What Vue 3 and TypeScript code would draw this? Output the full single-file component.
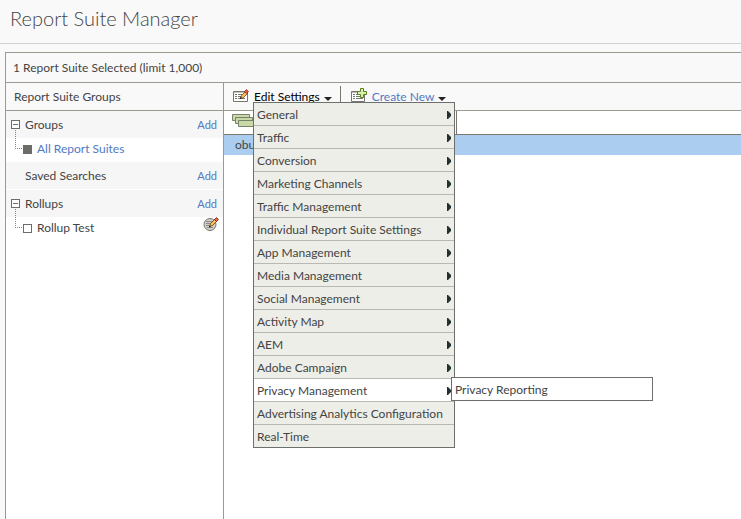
<script setup lang="ts">
import { ref } from 'vue'

interface MenuItem {
  label: string
  submenu: boolean
  children?: string[]
}

const withArrow = (label: string, children?: string[]): MenuItem => ({ label, submenu: true, children })

const menuItems: MenuItem[] = [
  withArrow('General'),
  withArrow('Traffic'),
  withArrow('Conversion'),
  withArrow('Marketing Channels'),
  withArrow('Traffic Management'),
  withArrow('Individual Report Suite Settings'),
  withArrow('App Management'),
  withArrow('Media Management'),
  withArrow('Social Management'),
  withArrow('Activity Map'),
  withArrow('AEM'),
  withArrow('Adobe Campaign'),
  withArrow('Privacy Management', ['Privacy Reporting']),
  { label: 'Advertising Analytics Configuration', submenu: false },
  { label: 'Real-Time', submenu: false },
]

const activeItem = ref('Privacy Management')
const allSuites = ref(true)
const rollupTest = ref(false)
</script>

<template>
  <div class="page">
    <header class="title-bar">
      <h1>Report Suite Manager</h1>
    </header>
    <main class="panel">
      <div class="selection">1 Report Suite Selected (limit 1,000)</div>
      <div class="columns">
        <aside class="sidebar">
          <h2 class="side-title">Report Suite Groups</h2>
          <section>
            <div class="group">
              <button class="toggle" type="button" aria-label="Collapse Groups"></button>
              <span class="group-name">Groups</span>
              <a href="#" class="add">Add</a>
            </div>
            <div class="leaf">
              <span class="branch"></span>
              <input id="all-suites" v-model="allSuites" type="checkbox" class="box" />
              <label for="all-suites" class="leaf-link">All Report Suites</label>
            </div>
          </section>
          <section>
            <div class="group">
              <span class="group-name">Saved Searches</span>
              <a href="#" class="add">Add</a>
            </div>
          </section>
          <section class="spaced">
            <div class="group">
              <button class="toggle" type="button" aria-label="Collapse Rollups"></button>
              <span class="group-name">Rollups</span>
              <a href="#" class="add">Add</a>
            </div>
            <div class="leaf">
              <span class="branch"></span>
              <input id="rollup-test" v-model="rollupTest" type="checkbox" class="box" />
              <label for="rollup-test">Rollup Test</label>
              <button class="edit" type="button" aria-label="Edit Rollup Test">
                <svg width="16" height="14" viewBox="0 0 16 14">
                  <circle cx="7" cy="7.500" r="6" fill="#d0d0ca" stroke="#77776f" />
                  <path d="M3 4.500h6M3 6.500h4M3 8.500h3M4 10.500h6" stroke="#8c8c84" />
                  <path d="M6.500 9.500l1-3 4-4 2 2-4 4z" fill="#fbbd55" stroke="#4a2a12" stroke-width=".7" />
                  <path d="M11.500 2.500l2-2 2 2-2 2z" fill="#ee5a48" stroke="#5e1712" stroke-width=".7" />
                  <path d="M6 10.500v-2l2 1z" fill="#222" />
                </svg>
              </button>
            </div>
          </section>
        </aside>

        <section class="content">
          <nav class="toolbar">
            <div class="tool">
              <svg class="tool-icon" width="16" height="14" viewBox="0 0 16 14">
                <path d="M.5 2.500h14v10H.5z" fill="#fff" stroke="#77776e" />
                <path d="M1 3.500h13" stroke="#c4c4ba" />
                <path d="M2 5.500h2M5 5.500h4M2 7.500h2M5 7.500h3M2 9.500h2M5 9.500h7" stroke="#77776e" />
                <path d="M7.500 9.500l1-3 4-4 2 2-4 4z" fill="#fbbd55" stroke="#5a3216" stroke-width=".7" />
                <path d="M11.500 2.500l2-2 2 2-2 2z" fill="#ee5a48" stroke="#7a1b15" stroke-width=".7" />
                <path d="M7 10V8l2 1z" fill="#222" />
              </svg>
              <button class="tool-button" type="button" aria-haspopup="menu" aria-expanded="true">
                <span class="strong">Edit Settings</span>
                <svg class="caret" width="8" height="4" viewBox="0 0 8 4"><path d="M0 0h8L4 4z" fill="#222" /></svg>
              </button>
              <ul class="menu" role="menu">
                <li
                  v-for="item in menuItems"
                  :key="item.label"
                  class="menu-item"
                  :class="{ active: item.label === activeItem }"
                  role="none"
                >
                  <button class="menu-button" type="button" role="menuitem" @mouseenter="activeItem = item.label">
                    <span>{{ item.label }}</span>
                    <svg v-if="item.submenu" class="arrow" width="4" height="8" viewBox="0 0 4 8">
                      <path d="M0 0h1l3 3v2L1 8H0z" fill="#24302f" />
                    </svg>
                  </button>
                  <ul v-if="item.children && item.label === activeItem" class="submenu" role="menu">
                    <li v-for="child in item.children" :key="child" role="none">
                      <button class="menu-button" type="button" role="menuitem">{{ child }}</button>
                    </li>
                  </ul>
                </li>
              </ul>
            </div>
            <div class="tool create">
              <svg class="tool-icon create-icon" width="16" height="16" viewBox="0 0 16 16">
                <path d="M.5 4.500h13v10H.5z" fill="#fff" stroke="#77776e" />
                <path d="M1 5.500h12" stroke="#b9b9ad" />
                <path d="M2 7.500h2M5 7.500h3M2 9.500h2M5 9.500h4M2 11.500h2M5 11.500h7" stroke="#77776e" />
                <path d="M9.500 1.500h3v3h3v3h-3v3h-3v-3h-3v-3h3z" fill="#dcefb0" stroke="#55821f" />
              </svg>
              <button class="tool-button" type="button" aria-haspopup="menu">
                <span class="blue">Create New</span>
                <svg class="caret" width="8" height="4" viewBox="0 0 8 4"><path d="M0 0h8L4 4z" fill="#222" /></svg>
              </button>
            </div>
          </nav>
          <table class="suites">
            <thead>
              <tr>
                <th class="first">
                  <svg width="28" height="14" viewBox="0 0 28 14" fill="#cadaa6" stroke="#77826a">
                    <path d="M.5.5h17v6H.5z" />
                    <path d="M3.500 3.500h17v6h-17z" />
                    <path d="M6.500 6.500h17v6h-17z" />
                  </svg>
                </th>
                <th></th>
              </tr>
            </thead>
            <tbody>
              <tr>
                <td>obu</td>
                <td></td>
              </tr>
            </tbody>
          </table>
        </section>
      </div>
    </main>
  </div>
</template>

<style>
body {
  margin: 0;
  background: #f9f9f9;
}
</style>

<style scoped>
* {
  box-sizing: border-box;
}

.page {
  display: flex;
  flex-direction: column;
  min-height: 100vh;
  overflow: hidden;
  color: #444;
  font: 12px/16px Lato, 'Open Sans', sans-serif;
}

.title-bar {
  padding: 4px 10px 11px;
  border-bottom: 1px solid #d2d2d0;
}

h1 {
  margin: 0;
  font-size: 20px;
  font-weight: 300;
  line-height: 28px;
}

h2 {
  margin: 0;
  font: inherit;
}

button {
  padding: 0;
  border: 0;
  background: none;
  color: inherit;
  font: inherit;
  text-align: left;
}

a,
.blue,
.leaf-link {
  color: #5179c4;
  text-decoration: none;
}

svg {
  display: block;
  flex: none;
}

.panel {
  display: flex;
  flex: 1;
  flex-direction: column;
  margin: 8px 0 0 5px;
  border: solid #999a90;
  border-width: 1px 0 0 1px;
}

.selection {
  height: 30px;
  padding: 7px;
  border-bottom: 1px solid #999a90;
}

.columns {
  display: flex;
  flex: 1;
}

.sidebar {
  flex: none;
  width: 218px;
  border-right: 1px solid #999a90;
  background: #fff;
}

.side-title {
  height: 28px;
  padding: 6px 8px;
  border-bottom: 1px solid #999a90;
  background: #f9f9f9;
}

.group {
  display: flex;
  align-items: center;
  height: 27px;
  padding-right: 6px;
  padding-left: 19px;
  background: #f6f6f6;
}

.add {
  margin-left: auto;
  font-size: 11px;
}

.toggle {
  width: 9px;
  height: 9px;
  margin: 0 5px 0 -14px;
  border: 1px solid #6d6d68;
  background: linear-gradient(#6d6d68, #6d6d68) center / 5px 1px no-repeat #fff;
}

.spaced {
  margin-top: 1px;
}

.leaf {
  display: flex;
  align-items: center;
  height: 24px;
  padding: 0 4px 2px 9px;
}

.branch {
  align-self: flex-start;
  width: 7px;
  height: 19px;
  margin-top: -8px;
  border: dotted #85857f;
  border-width: 0 0 1px 1px;
}

.box {
  width: 9px;
  height: 9px;
  margin: 0 5px 0 1px;
  border: 1px solid #6d6d68;
  background: #fff;
  appearance: none;
}

.box:checked {
  background: #6d6d68;
}

.edit {
  align-self: flex-start;
  margin-left: auto;
}

.content {
  flex: 1;
  min-width: 0;
  background: #fff;
}

.toolbar {
  display: flex;
  height: 28px;
  padding-left: 9px;
  border-bottom: 1px solid #999a90;
  background: #f9f9f9;
}

.tool {
  display: flex;
  position: relative;
  gap: 5px;
  padding-right: 8px;
}

.tool-icon {
  align-self: flex-start;
  margin-top: 6px;
}

.create-icon {
  margin-top: 4px;
}

.tool-button {
  display: flex;
  align-items: center;
  gap: 4px;
}

.caret {
  margin-top: 4px;
}

.strong {
  color: #000;
}

.create {
  padding-left: 10px;
}

.create::before {
  content: '';
  align-self: flex-start;
  width: 1px;
  height: 16px;
  margin: 3px 5px 0 -10px;
  background: #77776e;
}

.menu {
  position: absolute;
  z-index: 2;
  top: 19px;
  left: 20px;
  width: 202px;
  margin: 0;
  padding: 0;
  border: solid #6d6f6d;
  border-width: 1px 1px 0;
  background: #edeee8;
  list-style: none;
}

.menu-item {
  position: relative;
  border-bottom: 1px solid #b8b9b3;
}

.menu-item:last-child {
  border-color: #6d6f6d;
}

.active {
  background: #fff;
}

.menu-button {
  display: flex;
  align-items: center;
  justify-content: space-between;
  width: 100%;
  height: 22px;
  padding: 2px 3px 0;
  white-space: nowrap;
}

.submenu {
  position: absolute;
  top: -2px;
  left: 197px;
  width: 202px;
  margin: 0;
  padding: 0;
  border: 1px solid #6d6f6d;
  background: #fff;
  list-style: none;
}

.suites {
  width: 100%;
  border-collapse: collapse;
  table-layout: fixed;
}

th {
  height: 23px;
  padding: 3px 8px;
  border-bottom: 1px solid #77776e;
  vertical-align: top;
}

.first {
  width: 232px;
  border-right: 1px solid #77776e;
}

td {
  height: 21px;
  padding: 0 11px;
  background: #abcdef;
}
</style>
